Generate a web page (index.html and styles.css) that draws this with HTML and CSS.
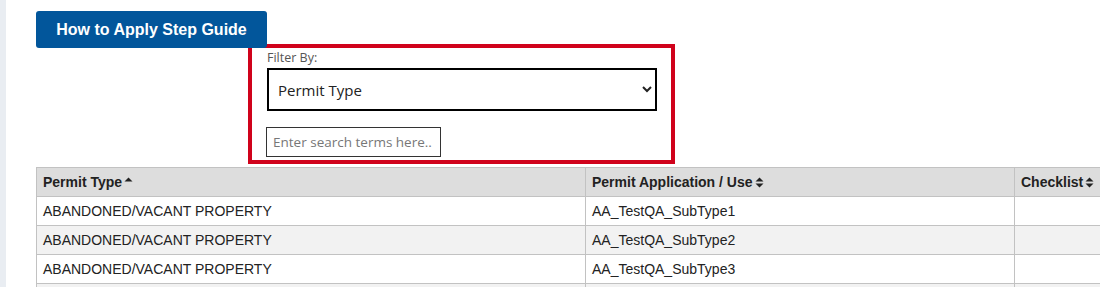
FILE: index.html
```html
<!DOCTYPE html>
<html lang="en">
<head>
<meta charset="utf-8">
<title>How to Apply</title>
<link rel="stylesheet" href="styles.css">
</head>
<body>
<div class="page">
  <aside class="rail"></aside>
  <main class="main">
    <button class="guide-btn" type="button">How to Apply Step Guide</button>
    <div class="filter-box">
      <label class="filter-label" for="filterBy">Filter By:</label>
      <select id="filterBy" class="filter-select">
        <option>Permit Type</option>
        <option>Permit Application / Use</option>
      </select>
      <input class="search-input" type="text" placeholder="Enter search terms here..">
    </div>
    <table class="grid">
      <colgroup>
        <col class="c1"><col class="c2"><col class="c3">
      </colgroup>
      <thead>
        <tr>
          <th>Permit Type<svg class="sort" viewBox="0 0 9 11" width="9" height="11"><path d="M0.5 4.5 L4.5 0.5 L8.5 4.5 Z" fill="#222"/></svg></th>
          <th>Permit Application / Use<svg class="sort" viewBox="0 0 9 11" width="9" height="11"><path d="M0.5 4.5 L4.5 0.5 L8.5 4.5 Z M0.5 6.5 L8.5 6.5 L4.5 10.5 Z" fill="#222"/></svg></th>
          <th>Checklist<svg class="sort" viewBox="0 0 9 11" width="9" height="11"><path d="M0.5 4.5 L4.5 0.5 L8.5 4.5 Z M0.5 6.5 L8.5 6.5 L4.5 10.5 Z" fill="#222"/></svg></th>
        </tr>
      </thead>
      <tbody>
        <tr><td>ABANDONED/VACANT PROPERTY</td><td>AA_TestQA_SubType1</td><td></td></tr>
        <tr><td>ABANDONED/VACANT PROPERTY</td><td>AA_TestQA_SubType2</td><td></td></tr>
        <tr><td>ABANDONED/VACANT PROPERTY</td><td>AA_TestQA_SubType3</td><td></td></tr>
        <tr><td></td><td></td><td></td></tr>
      </tbody>
    </table>
  </main>
</div>
</body>
</html>
```

FILE: styles.css
```css
html, body {
  margin: 0;
  padding: 0;
  background: #ffffff;
}

.page {
  display: flex;
  height: 287px;
  overflow: hidden;
  font-family: "Liberation Sans", Arial, sans-serif;
}

.rail {
  width: 6px;
  flex: 0 0 6px;
  background: #e9edf2;
}

.main {
  flex: 1;
  padding-left: 30px;
  padding-top: 11px;
  min-width: 0;
  overflow: hidden;
}

.guide-btn {
  position: relative;
  z-index: 1;
  display: block;
  width: 231px;
  height: 37px;
  margin: 0;
  padding: 0 20px;
  border: none;
  border-radius: 3px;
  background: #02569b;
  color: #ffffff;
  font-family: "Liberation Sans", Arial, sans-serif;
  font-weight: bold;
  font-size: 16px;
  cursor: pointer;
}

.filter-box {
  width: 391px;
  margin-left: 212px;
  margin-top: -4px;
  border: 4px solid #d0021b;
  padding: 2px 14px 3px 14px;
  font-family: "Open Sans", "Noto Sans", sans-serif;
  display: flex;
  flex-direction: column;
  align-items: flex-start;
}

.filter-label {
  display: block;
  font-size: 12.5px;
  line-height: 16px;
  color: #555555;
  margin-left: 1px;
  margin-bottom: 2px;
}

.filter-select {
  width: 390px;
  height: 43px;
  margin-left: 1px;
  border: 2px solid #000000;
  border-radius: 0;
  background: #ffffff;
  color: #222222;
  font-family: "Open Sans", "Noto Sans", sans-serif;
  font-size: 15px;
  padding: 0 6px 0 5px;
}

.search-input {
  width: 175px;
  height: 30px;
  box-sizing: border-box;
  margin-top: 16px;
  border: 1px solid #333333;
  border-radius: 0;
  padding: 0 4px 0 6px;
  font-family: "Open Sans", "Noto Sans", sans-serif;
  font-size: 13.5px;
  color: #333333;
}

.search-input::placeholder {
  color: #777777;
}

.grid {
  margin-top: 3px;
  width: 1100px;
  border-collapse: collapse;
  table-layout: fixed;
  font-size: 14px;
  color: #222222;
}

.c1 { width: 549px; }
.c2 { width: 429px; }
.c3 { width: 122px; }

.grid th,
.grid td {
  border: 1px solid #c2c2c2;
  padding: 6px 6px;
  line-height: 16px;
  height: 16px;
  text-align: left;
  white-space: nowrap;
  overflow: hidden;
}

.grid th {
  background: #dddddd;
  font-weight: bold;
  color: #222222;
  padding-top: 6px;
  padding-bottom: 6px;
}

.grid tbody tr:nth-child(even) td {
  background: #f2f2f2;
}

.sort {
  margin-left: 2px;
  vertical-align: -1px;
}
```
